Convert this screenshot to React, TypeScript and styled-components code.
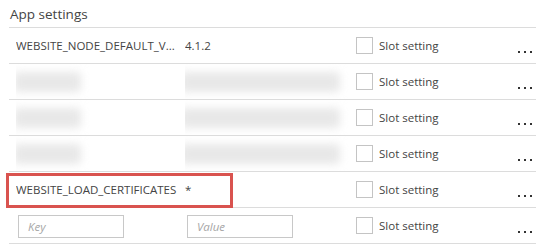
import React from 'react';
import styled, { createGlobalStyle } from 'styled-components';

const GlobalStyle = createGlobalStyle`
  html, body {
    margin: 0;
    padding: 0;
    background: #fff;
  }
  body {
    font-family: "Open Sans", "Noto Sans", sans-serif;
    color: #444;
  }
`;

type Setting = { name?: string; value?: string; hidden?: boolean; highlight?: boolean };

const settings: Setting[] = [
    { name: 'WEBSITE_NODE_DEFAULT_V...', value: '4.1.2' },
    { hidden: true },
    { hidden: true },
    { hidden: true },
    { name: 'WEBSITE_LOAD_CERTIFICATES', value: '*', highlight: true },
];

export default function App() {
    return (
        <>
            <GlobalStyle />
            <Panel>
                <Title>App settings</Title>
                <Table>
                    {settings.map((item, index) => (
                        <Row key={index}>
                            {item.highlight && <Highlight />}
                            {item.hidden ? (
                                <>
                                    <Cell><Blur $width={67} /></Cell>
                                    <Cell><Blur $width={160} $shift={-5} /></Cell>
                                </>
                            ) : (
                                <>
                                    <Cell>{item.name}</Cell>
                                    <Cell>{item.value}</Cell>
                                </>
                            )}
                            <SlotCell>
                                <Checkbox />
                                <span>Slot setting</span>
                            </SlotCell>
                            <More><Dot /><Dot /><Dot /></More>
                        </Row>
                    ))}

                    {/* new setting row */}
                    <Row>
                        <Cell><Field placeholder="Key" /></Cell>
                        <Cell><Field placeholder="Value" /></Cell>
                        <SlotCell>
                            <Checkbox />
                            <span>Slot setting</span>
                        </SlotCell>
                        <More><Dot /><Dot /><Dot /></More>
                    </Row>
                </Table>
            </Panel>
        </>
    );
}

const Panel = styled.div`
  width: 527px;
  padding-left: 9px;
`;

const Title = styled.div`
  font-size: 13.5px;
  color: #444;
  height: 28px;
  line-height: 28px;
  padding-left: 1px;
  border-bottom: 1px solid #dcdcdc;
  box-sizing: border-box;
`;

const Table = styled.div`
  display: flex;
  flex-direction: column;
`;

const Row = styled.div`
  position: relative;
  display: grid;
  grid-template-columns: 169px 171px 162px 18px;
  align-items: center;
  height: 36px;
  padding-left: 7px;
  border-bottom: 1px solid #dcdcdc;
  box-sizing: border-box;
  font-size: 11.5px;
  color: #444;
`;

const Highlight = styled.div`
  position: absolute;
  left: -3px;
  top: 1px;
  width: 227px;
  height: 35px;
  border: 3px solid #d9534f;
  box-sizing: border-box;
  pointer-events: none;
`;

const Cell = styled.div`
  white-space: nowrap;
  overflow: hidden;
  display: flex;
  align-items: center;
  height: 100%;
`;

const Blur = styled.div<{ $width: number; $shift?: number }>`
  width: ${p => p.$width}px;
  height: 20px;
  margin-left: ${p => p.$shift ?? -2}px;
  background: #e8e8e8;
  border-radius: 4px;
  filter: blur(4px);
`;

const Field = styled.input`
  width: 106px;
  height: 23px;
  margin-left: 2px;
  margin-top: 1px;
  padding: 0 9px;
  box-sizing: border-box;
  border: 1px solid #c8c8c8;
  font-family: inherit;
  font-size: 11.5px;
  font-style: italic;
  color: #444;
  outline: none;
  &::placeholder {
    color: #a6a6a6;
  }
`;

const SlotCell = styled.div`
  display: flex;
  align-items: center;
  gap: 6px;
  font-size: 11.5px;
  color: #444;
`;

const Checkbox = styled.span`
  display: inline-block;
  width: 17px;
  height: 17px;
  box-sizing: border-box;
  border: 1px solid #c4c4c4;
  background: #fff;
`;

const More = styled.div`
  display: flex;
  gap: 4px;
  margin-top: 12px;
`;

const Dot = styled.span`
  width: 2px;
  height: 2px;
  background: #333;
`;
